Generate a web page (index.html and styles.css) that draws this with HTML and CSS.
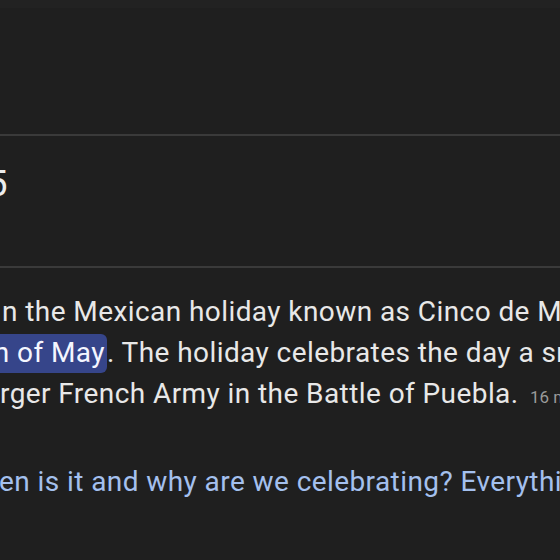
FILE: index.html
```html
<!DOCTYPE html>
<html>
<head>
<meta charset="utf-8">
<link rel="stylesheet" href="styles.css">
</head>
<body>
<div class="page">
  <div class="topband"></div>
  <div class="header-space"></div>
  <div class="rule"></div>
  <div class="title-row"><span class="title">May 5</span></div>
  <div class="rule"></div>
  <div class="snippet">
    <div class="line l1">n the Mexican holiday known as Cinco de Mayo, Spanish</div>
    <div class="line l2"><span class="hl">Fifth of May</span>. The holiday celebrates the day a small Mexican</div>
    <div class="line l3">rger French Army in the Battle of Puebla. <span class="age">16 minutes ago</span></div>
  </div>
  <div class="link-row">
    <div class="line link">en is it and why are we celebrating? Everything you need to know</div>
  </div>
</div>
</body>
</html>
```

FILE: styles.css
```css
html, body {
  margin: 0;
  padding: 0;
  background: #1f1f1f;
  width: 560px;
  height: 560px;
  overflow: hidden;
}
.page {
  font-family: Roboto, "Open Sans", sans-serif;
  color: #e8e8e8;
  width: 560px;
  overflow: hidden;
}
.topband {
  height: 8px;
  background: #222222;
}
.header-space {
  height: 126px;
}
.rule {
  height: 2px;
  background: #3a3a3a;
}
.title-row {
  height: 94px;
  padding-bottom: 36px;
  display: flex;
  align-items: center;
  overflow: hidden;
}
.title {
  font-size: 37px;
  white-space: nowrap;
  margin-left: -92px;
  color: #ececec;
}
.snippet {
  padding-top: 23px;
  overflow: hidden;
}
.line {
  white-space: nowrap;
  font-size: 28px;
  letter-spacing: 0.42px;
  line-height: 41px;
  height: 41px;
}
.l1 { text-indent: 2px; }
.l2 { text-indent: -49px; }
.l3 { text-indent: 0; }
.hl {
  background: #36458a;
  color: #f4f6ff;
  border-radius: 6px;
  padding: 2px 2px 4px 0;
}
.age {
  font-size: 17px;
  letter-spacing: 0;
  color: #9a9a9a;
  margin-left: 4px;
}
.link-row {
  padding-top: 47px;
  overflow: hidden;
}
.link {
  color: #a4c0ee;
  text-indent: -1px;
}
```
